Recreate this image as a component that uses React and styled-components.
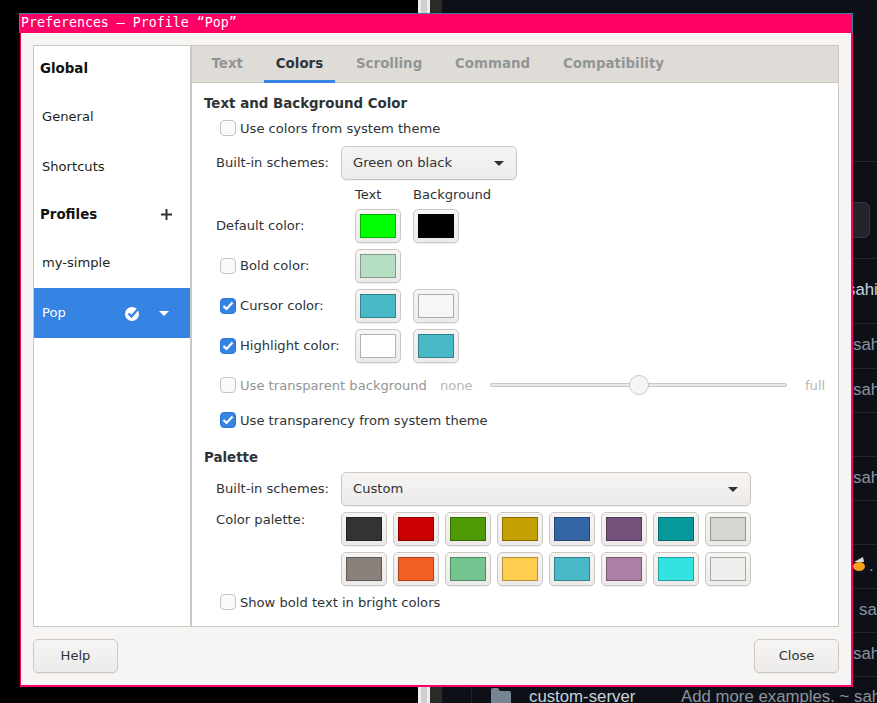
import React from "react";
import styled, { createGlobalStyle } from "styled-components";

const GlobalStyle = createGlobalStyle`
    html, body {
        margin: 0;
        padding: 0;
        background: #000;
    }
    #root {
        width: 877px;
        height: 703px;
        overflow: hidden;
    }
`;

const Desktop = styled.div`
    position: relative;
    width: 877px;
    height: 703px;
    display: flex;
    overflow: hidden;
    background: #000;
    font-family: "Liberation Sans", Arial, sans-serif;
`;

const BlackSide = styled.div`
    width: 418px;
    flex: none;
`;

const Scrollbar = styled.div`
    width: 12px;
    flex: none;
    box-sizing: border-box;
    background: #cfcfcf;
    border-left: 3px solid #ececec;
    border-right: 3px solid #ececec;
`;

const ScrollGutter = styled.div`
    width: 12px;
    flex: none;
    background: #2a2a28;
`;

const Page = styled.div`
    flex: 1;
    min-width: 0;
    background: #0d1117;
    padding-top: 161px;
    overflow: hidden;
`;

const SearchRow = styled.div`
    height: 98px;
    box-sizing: border-box;
    border-top: 1px solid #21262d;
    border-bottom: 1px solid #21262d;
    display: flex;
    justify-content: flex-end;
    padding: 40px 7px 0 0;
`;

const SearchBox = styled.div`
    width: 60px;
    height: 36px;
    border-radius: 6px;
    background: #21262d;
    border: 1px solid #30363d;
    box-sizing: border-box;
`;

const FileRow = styled.div`
    height: ${(p) => p.$height}px;
    box-sizing: border-box;
    border-bottom: 1px solid #21262d;
    display: flex;
    align-items: center;
    white-space: nowrap;
    overflow: hidden;
    font-size: 16.8px;
    color: ${(p) => (p.$bright ? "#c9d1d9" : "#8b949e")};
    padding: 0 0 2px ${(p) => p.$indent}px;
`;

const RowEmoji = styled.svg`
    width: 12px;
    height: 15px;
    flex: none;
    margin: 0 4px 4px 0;
`;

const LastRow = styled.div`
    height: 44px;
    box-sizing: border-box;
    margin-left: 29px;
    border-left: 1px solid #21262d;
    display: flex;
    align-items: center;
    white-space: nowrap;
    padding: 0 0 4px 19px;
    font-size: 16.8px;
    color: #8b949e;
`;

const FolderIcon = styled.svg`
    width: 20px;
    height: 18px;
    flex: none;
`;

const FileName = styled.span`
    color: #c9d1d9;
    width: 152px;
    flex: none;
    margin-left: 18px;
`;

const Window = styled.div`
    position: absolute;
    left: 19px;
    top: 13px;
    width: 834px;
    height: 674px;
    display: flex;
    flex-direction: column;
    box-sizing: border-box;
`;

const TitleBar = styled.div`
    height: 20px;
    flex: none;
    box-sizing: border-box;
    background: #ff0066;
    border-top: 1px solid #3f7f9f;
    border-left: 1px solid #3f7f9f;
    border-right: 1px solid #3f7f9f;
    padding-left: 1px;
    font-family: "DejaVu Sans Mono", monospace;
    font-size: 13.28px;
    line-height: 18px;
    color: #fff;
    white-space: nowrap;
`;

const WindowBody = styled.div`
    flex: 1;
    min-height: 0;
    margin-left: 1px;
    box-sizing: border-box;
    background: #f6f5f4;
    border: 2px solid #ff0066;
    border-left-width: 1px;
    border-top: none;
    padding: 12px 12px 0 12px;
    font-family: "DejaVu Sans", sans-serif;
    font-size: 13.1px;
    line-height: 15px;
    color: #2e3436;
`;

const Frame = styled.div`
    height: 582px;
    box-sizing: border-box;
    border: 1px solid #cdc7c2;
    display: flex;
    background: #fff;
`;

const Sidebar = styled.div`
    width: 156px;
    flex: none;
    border-right: 2px solid #cdc7c2;
    display: flex;
    flex-direction: column;
`;

const SideHeader = styled.div`
    height: ${(p) => p.$height}px;
    display: flex;
    align-items: center;
    justify-content: space-between;
    padding: 0 18px 0 6px;
    font-size: 13.4px;
    font-weight: 700;
    color: #111;
`;

const SideRow = styled.div`
    height: 50px;
    flex: none;
    display: flex;
    align-items: center;
    padding: 0 21px 0 8px;
    color: ${(p) => (p.$selected ? "#fff" : "#1c1f20")};
    background: ${(p) => (p.$selected ? "#3584e4" : "transparent")};
`;

const SideLabel = styled.span`
    flex: 1;
    padding-bottom: 2px;
`;

const DefaultMark = styled.svg`
    width: 15px;
    height: 15px;
    margin-right: 19px;
    display: block;
`;

const Arrow = styled.svg`
    width: 10px;
    height: 5px;
    display: block;
    flex: none;
`;

const Main = styled.div`
    flex: 1;
    min-width: 0;
    display: flex;
    flex-direction: column;
`;

const TabBar = styled.div`
    height: 37px;
    flex: none;
    box-sizing: border-box;
    background: #dfdcd8;
    border-bottom: 1px solid #cdc7c2;
    display: flex;
    gap: 8.8px;
    padding-left: 7.5px;
`;

const Tab = styled.div`
    height: 37px;
    box-sizing: border-box;
    padding: 0 12px;
    display: flex;
    align-items: center;
    font-size: 13.4px;
    font-weight: 700;
    color: ${(p) => (p.$active ? "#2e3436" : "#929595")};
    border-bottom: 3px solid ${(p) => (p.$active ? "#3584e4" : "transparent")};
`;

const Content = styled.div`
    flex: 1;
    padding: 9px 0 0 12px;
    display: flex;
    flex-direction: column;
`;

const Heading = styled.div`
    height: 24px;
    flex: none;
    line-height: 24px;
    font-size: 13.4px;
    font-weight: 700;
    margin-top: ${(p) => p.$top || 0}px;
`;

const Row = styled.div`
    display: flex;
    align-items: center;
    flex: none;
    height: ${(p) => p.$height || 34}px;
    margin-top: ${(p) => p.$top || 0}px;
`;

const FieldLabel = styled.div`
    width: ${(p) => (p.$wide ? 139 : 125)}px;
    flex: none;
    padding: 0 0 2px 12px;
`;

const CheckLabel = styled.label`
    width: ${(p) => (p.$width ? `${p.$width}px` : "auto")};
    flex: none;
    display: flex;
    align-items: center;
    gap: 4px;
    margin-left: 16px;
    white-space: nowrap;
    color: ${(p) => (p.$disabled ? "#929595" : "inherit")};
`;

const CheckText = styled.span`
    padding-bottom: ${(p) => (p.$lift ? 2 : 0)}px;
`;

const CheckBox = styled.span`
    width: 16px;
    height: 16px;
    flex: none;
    box-sizing: border-box;
    border-radius: 4px;
    display: flex;
    align-items: center;
    justify-content: center;
    border: 1px solid ${(p) => (p.$checked ? "#2a76d6" : "#c8c2bc")};
    background: ${(p) => (p.$checked ? "#3584e4" : "#fbfafa")};
`;

const Combo = styled.div`
    width: ${(p) => p.$width}px;
    height: 34px;
    box-sizing: border-box;
    flex: none;
    border: 1px solid #cdc7c2;
    border-radius: 5px;
    background: linear-gradient(#f6f5f4, #edebe9);
    box-shadow: 0 1px 0 rgba(0, 0, 0, 0.06);
    display: flex;
    align-items: center;
    justify-content: space-between;
    padding: 0 12px 0 11px;
`;

const ComboText = styled.span`
    padding-bottom: 2px;
`;

const HeaderCell = styled.div`
    width: 58px;
    flex: none;
    white-space: nowrap;
`;

const SwatchGroup = styled.div`
    display: flex;
    gap: 12px;
`;

const SwatchButton = styled.div`
    width: 46px;
    height: 34px;
    flex: none;
    box-sizing: border-box;
    padding: 4px;
    border: 1px solid #cdc7c2;
    border-radius: 5px;
    background: linear-gradient(#f6f5f4, #edebe9);
    box-shadow: 0 1px 0 rgba(0, 0, 0, 0.06);
`;

const SwatchColor = styled.div`
    width: 36px;
    height: 24px;
    box-sizing: border-box;
    border: 1px solid rgba(0, 0, 0, 0.3);
    background: ${(p) => p.$color};
`;

const PaletteGrid = styled.div`
    display: grid;
    grid-template-columns: repeat(8, 46px);
    grid-auto-rows: 34px;
    gap: 6px;
`;

const PaletteRow = styled.div`
    display: flex;
    align-items: flex-start;
    margin-top: 6px;
    flex: none;
`;

const PaletteLabel = styled(FieldLabel)`
    line-height: 16px;
    padding-bottom: 0;
`;

const SliderEnd = styled.span`
    color: #b8b8b6;
    flex: none;
    width: ${(p) => p.$width}px;
`;

const SliderTrack = styled.div`
    position: relative;
    width: 297px;
    height: 4px;
    flex: none;
    box-sizing: border-box;
    border: 1px solid #cdc7c2;
    border-radius: 2px;
    background: #ebe9e6;
    margin-right: 18px;
`;

const SliderThumb = styled.div`
    position: absolute;
    top: -9px;
    left: 138px;
    width: 20px;
    height: 20px;
    box-sizing: border-box;
    border-radius: 50%;
    border: 1px solid #cdc7c2;
    background: #f6f5f4;
`;

const Footer = styled.div`
    display: flex;
    justify-content: space-between;
    margin-top: 12px;
`;

const FooterButton = styled.div`
    width: 85px;
    height: 34px;
    box-sizing: border-box;
    border: 1px solid #cdc7c2;
    border-radius: 5px;
    background: linear-gradient(#f6f5f4, #edebe9);
    box-shadow: 0 1px 0 rgba(0, 0, 0, 0.06);
    padding-bottom: 2px;
    display: flex;
    align-items: center;
    justify-content: center;
`;

const DownArrow = ({ color }) => (
    <Arrow viewBox="0 0 10 5">
        <path d="M0 0h10L5 5z" fill={color} />
    </Arrow>
);

const Check = ({ checked }) => (
    <CheckBox $checked={checked}>
        {checked && (
            <svg width="12" height="10" viewBox="0 0 12 10">
                <path d="M1.5 5l3 3 6-6.5" fill="none" stroke="#fff" strokeWidth="2.2" />
            </svg>
        )}
    </CheckBox>
);

const CheckField = ({ checked, disabled, width, lift, children }) => (
    <CheckLabel $disabled={disabled} $width={width}>
        <Check checked={checked} />
        <CheckText $lift={lift}>{children}</CheckText>
    </CheckLabel>
);

const Swatch = ({ color }) => (
    <SwatchButton>
        <SwatchColor $color={color} />
    </SwatchButton>
);

const SwatchPair = ({ colors }) => (
    <SwatchGroup>
        {colors.map((color, idx) => (
            <Swatch key={idx} color={color} />
        ))}
    </SwatchGroup>
);

const tabs = ["Text", "Colors", "Scrolling", "Command", "Compatibility"];

const palette = [
    "#333333", "#cc0000", "#4e9a06", "#c4a000", "#3465a4", "#75507b", "#06989a", "#d3d7cf",
    "#8a817c", "#f35f23", "#73c48f", "#ffce51", "#48b9c7", "#ad7fa8", "#34e2e2", "#eeeeec",
];

const fileRows = [
    { height: 65, indent: 405, text: "sahi", bright: true },
    { height: 45, indent: 411, text: "sah" },
    { height: 44, indent: 411, text: "sah" },
    { height: 44, indent: 411, text: "" },
    { height: 44, indent: 411, text: "sah" },
    { height: 44, indent: 411, text: "" },
    { height: 44, indent: 411, text: ".", emoji: true },
    { height: 44, indent: 417, text: "sa" },
    { height: 44, indent: 411, text: "sah" },
];

const App = () => {
    return (
        <Desktop>
            <GlobalStyle />
            <BlackSide />
            <Scrollbar />
            <ScrollGutter />
            <Page>
                <SearchRow>
                    <SearchBox />
                </SearchRow>
                {fileRows.map((row, idx) => (
                    <FileRow key={idx} $height={row.height} $indent={row.indent} $bright={row.bright}>
                        {row.emoji && (
                            <RowEmoji viewBox="0 0 12 15">
                                <path d="M1 6l9-5 1 5z" fill="#d8dce0" />
                                <ellipse cx="6" cy="10.5" rx="6" ry="4.5" fill="#f4a01c" />
                            </RowEmoji>
                        )}
                        {row.text}
                    </FileRow>
                ))}
                <LastRow>
                    <FolderIcon viewBox="0 0 20 18">
                        <path d="M0 2a2 2 0 0 1 2-2h5l2 3h9a2 2 0 0 1 2 2v11a2 2 0 0 1-2 2H2a2 2 0 0 1-2-2z" fill="#768390" />
                    </FolderIcon>
                    <FileName>custom-server</FileName>
                    Add more examples. ~ sah
                </LastRow>
            </Page>

            <Window>
                <TitleBar>Preferences — Profile “Pop”</TitleBar>
                <WindowBody>
                    <Frame>
                        <Sidebar>
                            <SideHeader $height={45}>Global</SideHeader>
                            <SideRow>General</SideRow>
                            <SideRow>Shortcuts</SideRow>
                            <SideHeader $height={47}>
                                Profiles
                                <svg width="11" height="11" viewBox="0 0 11 11">
                                    <path d="M5.5 0v11M0 5.5h11" stroke="#2e3436" strokeWidth="2" />
                                </svg>
                            </SideHeader>
                            <SideRow>
                                <SideLabel>my-simple</SideLabel>
                            </SideRow>
                            <SideRow $selected>
                                <SideLabel>Pop</SideLabel>
                                <DefaultMark viewBox="0 0 15 15">
                                    <circle cx="7" cy="8" r="7" fill="#fff" />
                                    <path d="M3.5 7.5l3 3 6-7" fill="none" stroke="#3584e4" strokeWidth="2.4" />
                                </DefaultMark>
                                <DownArrow color="#fff" />
                            </SideRow>
                        </Sidebar>
                        <Main>
                            <TabBar>
                                {tabs.map((tab) => (
                                    <Tab key={tab} $active={tab === "Colors"}>{tab}</Tab>
                                ))}
                            </TabBar>
                            <Content>
                                <Heading>Text and Background Color</Heading>
                                <Row $height={24}>
                                    <CheckField>Use colors from system theme</CheckField>
                                </Row>
                                <Row $top={6}>
                                    <FieldLabel>Built-in schemes:</FieldLabel>
                                    <Combo $width={176}>
                                        <ComboText>Green on black</ComboText>
                                        <DownArrow color="#2e3436" />
                                    </Combo>
                                </Row>
                                <Row $height={20} $top={4}>
                                    <FieldLabel $wide />
                                    <HeaderCell>Text</HeaderCell>
                                    <HeaderCell>Background</HeaderCell>
                                </Row>
                                <Row $top={5}>
                                    <FieldLabel $wide>Default color:</FieldLabel>
                                    <SwatchPair colors={["#00ff00", "#000000"]} />
                                </Row>
                                <Row $top={6}>
                                    <CheckField width={135} lift>Bold color:</CheckField>
                                    <SwatchPair colors={["#b6dec3"]} />
                                </Row>
                                <Row $top={6}>
                                    <CheckField width={135} lift checked>Cursor color:</CheckField>
                                    <SwatchPair colors={["#48b9c7", "#f6f6f6"]} />
                                </Row>
                                <Row $top={6}>
                                    <CheckField width={135} lift checked>Highlight color:</CheckField>
                                    <SwatchPair colors={["#ffffff", "#48b9c7"]} />
                                </Row>
                                <Row $height={32} $top={6}>
                                    <CheckField width={220} disabled>Use transparent background</CheckField>
                                    <SliderEnd $width={50}>none</SliderEnd>
                                    <SliderTrack>
                                        <SliderThumb />
                                    </SliderTrack>
                                    <SliderEnd $width={24}>full</SliderEnd>
                                </Row>
                                <Row $height={24} $top={7}>
                                    <CheckField checked>Use transparency from system theme</CheckField>
                                </Row>
                                <Heading $top={14}>Palette</Heading>
                                <Row $top={2}>
                                    <FieldLabel>Built-in schemes:</FieldLabel>
                                    <Combo $width={410}>
                                        <ComboText>Custom</ComboText>
                                        <DownArrow color="#2e3436" />
                                    </Combo>
                                </Row>
                                <PaletteRow>
                                    <PaletteLabel>Color palette:</PaletteLabel>
                                    <PaletteGrid>
                                        {palette.map((color, idx) => (
                                            <Swatch key={idx} color={color} />
                                        ))}
                                    </PaletteGrid>
                                </PaletteRow>
                                <Row $height={24} $top={4}>
                                    <CheckField>Show bold text in bright colors</CheckField>
                                </Row>
                            </Content>
                        </Main>
                    </Frame>
                    <Footer>
                        <FooterButton>Help</FooterButton>
                        <FooterButton>Close</FooterButton>
                    </Footer>
                </WindowBody>
            </Window>
        </Desktop>
    );
};

export default App;
